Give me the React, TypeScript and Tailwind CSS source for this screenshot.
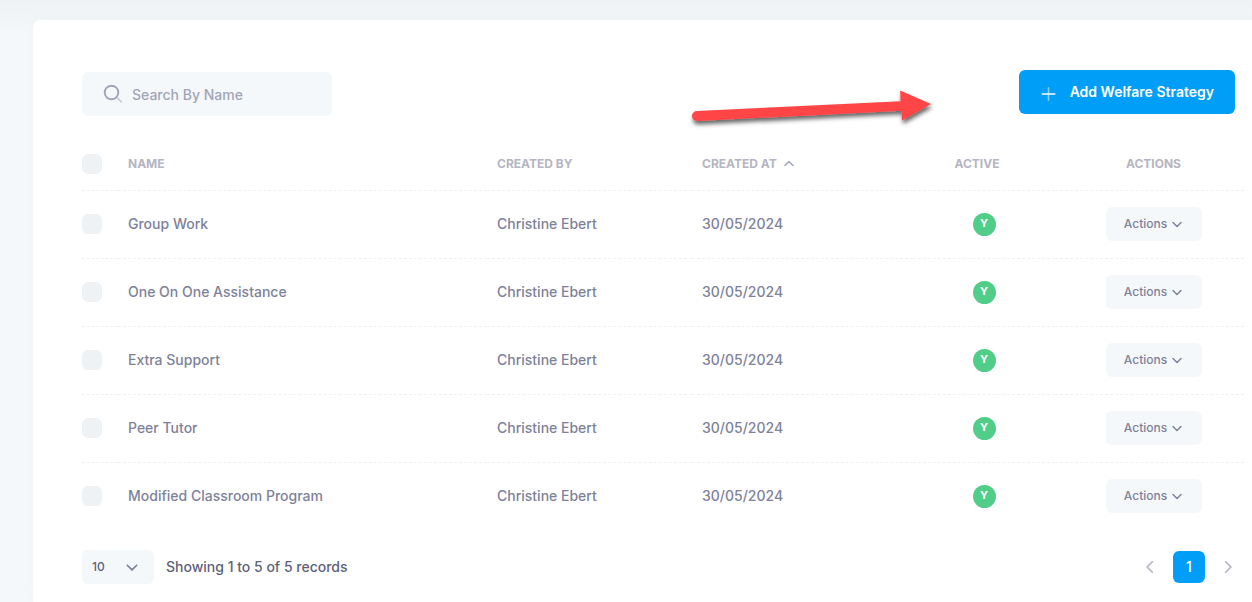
import { useState } from "react";

interface Strategy {
  id: number;
  name: string;
  createdBy: string;
  createdAt: string;
  active: boolean;
}

const strategies: Strategy[] = [
  { id: 1, name: "Group Work", createdBy: "Christine Ebert", createdAt: "30/05/2024", active: true },
  { id: 2, name: "One On One Assistance", createdBy: "Christine Ebert", createdAt: "30/05/2024", active: true },
  { id: 3, name: "Extra Support", createdBy: "Christine Ebert", createdAt: "30/05/2024", active: true },
  { id: 4, name: "Peer Tutor", createdBy: "Christine Ebert", createdAt: "30/05/2024", active: true },
  { id: 5, name: "Modified Classroom Program", createdBy: "Christine Ebert", createdAt: "30/05/2024", active: true },
];

const chevronPaths = {
  up: "M2 7.5 6 3.5 10 7.5",
  down: "M2 4.5 6 8.5 10 4.5",
  left: "M8 1.5 3.5 6 8 10.5",
  right: "M4 1.5 8.5 6 4 10.5",
};

function Chevron({ dir, className }: { dir: keyof typeof chevronPaths; className?: string }) {
  return (
    <svg
      viewBox="0 0 12 12"
      className={className}
      fill="none"
      stroke="currentColor"
      strokeWidth="1.5"
      strokeLinecap="round"
      strokeLinejoin="round"
      aria-hidden="true"
    >
      <path d={chevronPaths[dir]} />
    </svg>
  );
}

function SearchIcon() {
  return (
    <svg
      viewBox="0 0 20 20"
      className="pointer-events-none absolute left-[21px] top-3 size-5"
      fill="none"
      stroke="#a1a5b7"
      aria-hidden="true"
    >
      <path d="M14 13.6 18.8 18.4" strokeWidth="2" opacity="0.5" />
      <circle cx="8.5" cy="8.5" r="6.8" strokeWidth="1.9" />
    </svg>
  );
}

function PlusIcon() {
  return (
    <svg viewBox="0 0 16 16" className="mt-1 size-4" fill="none" stroke="#fff" strokeLinecap="round" aria-hidden="true">
      <path d="M8.5 1.8V14.2" strokeWidth="1.6" opacity="0.5" />
      <path d="M2.3 8H14.7" strokeWidth="1.6" />
    </svg>
  );
}

function PointerArrow() {
  return (
    <svg
      viewBox="0 0 250 50"
      className="pointer-events-none absolute right-[306px] top-4 h-[50px] w-[250px]"
      aria-hidden="true"
    >
      <defs>
        <filter id="arrow-shadow" x="-10%" y="-40%" width="120%" height="200%">
          <feDropShadow dx="1" dy="3.5" stdDeviation="2" floodColor="#000" floodOpacity="0.6" />
        </filter>
      </defs>
      <g filter="url(#arrow-shadow)" fill="#ff4444">
        <path d="M9 25 212.5 15.2 212.2 4.5 243 18 214 34.5 213.4 24.8 9 35A5 5 0 0 1 9 25Z" />
      </g>
    </svg>
  );
}

function CheckBox({ label }: { label: string }) {
  return (
    <input
      type="checkbox"
      aria-label={label}
      className="block size-5 appearance-none rounded-md bg-[#eff2f5] checked:bg-[#009ef7]"
    />
  );
}

export default function App() {
  const [search, setSearch] = useState("");
  const rows = strategies.filter((s) => s.name.toLowerCase().includes(search.toLowerCase()));

  return (
    <main className="min-h-screen bg-[#f5f8fa] bg-linear-to-b from-[#eff2f5] to-[#f5f8fa] to-[36px] pl-[33px] pt-5 font-[Inter,'Liberation_Sans',sans-serif] text-sm font-medium text-[#7e8299]">
      <section className="min-h-[calc(100vh-20px)] rounded-tl-lg bg-white pb-4 pl-[49px] pr-2 pt-[50px] shadow-[0_0_20px_rgba(76,87,125,0.02)]">
        <div className="relative flex items-start justify-between pr-[9px]">
          <div className="relative mt-0.5">
            <SearchIcon />
            <input
              type="text"
              aria-label="Search By Name"
              placeholder="Search By Name"
              value={search}
              onChange={(e) => setSearch(e.target.value)}
              className="block h-11 w-[250px] rounded-md bg-[#f5f8fa] pl-[50px] pr-3 text-sm text-[#5e6278] outline-none placeholder:text-[#a1a5b7]"
            />
          </div>
          <PointerArrow />
          <button
            type="button"
            className="flex h-11 items-center gap-3.5 rounded-md bg-[#009ef7] px-[21px] text-sm font-semibold text-white"
          >
            <PlusIcon />
            Add Welfare Strategy
          </button>
        </div>

        <table className="mt-[22px] w-full table-fixed border-collapse text-left">
          <colgroup>
            <col className="w-9" />
            <col />
            <col className="w-[205px]" />
            <col className="w-[221px]" />
            <col className="w-[142px]" />
            <col className="w-[189px]" />
          </colgroup>
          <thead>
            <tr className="h-[52px] border-b border-dashed border-[#eff2f5] text-xs uppercase text-[#b5b5c3]">
              <th scope="col">
                <CheckBox label="Select all" />
              </th>
              <th scope="col" className="px-2.5 font-bold">Name</th>
              <th scope="col" className="px-2.5 font-bold">Created By</th>
              <th scope="col" aria-sort="ascending" className="px-2.5 font-bold">
                <span className="flex items-center gap-1.5">
                  Created At
                  <Chevron dir="up" className="size-3 text-[#a1a5b7]" />
                </span>
              </th>
              <th scope="col" className="pl-2.5 pr-6 text-center font-bold">Active</th>
              <th scope="col" className="pl-2 text-center font-bold">Actions</th>
            </tr>
          </thead>
          <tbody>
            {rows.map((row) => (
              <tr key={row.id} className="h-[68px] border-b border-dashed border-[#eff2f5] last:border-b-0">
                <td>
                  <CheckBox label={`Select ${row.name}`} />
                </td>
                <td className="px-2.5">{row.name}</td>
                <td className="px-2.5">{row.createdBy}</td>
                <td className="px-2.5">{row.createdAt}</td>
                <td className="text-center">
                  <span className="inline-flex size-[23px] items-center justify-center rounded-full bg-[#50cd89] align-middle text-[11px] font-bold text-white">
                    {row.active ? "Y" : "N"}
                  </span>
                </td>
                <td className="pl-2 text-center">
                  <button
                    type="button"
                    className="inline-flex h-[34px] w-24 items-center justify-center gap-1 rounded-md bg-[#f5f8fa] align-middle text-xs font-medium"
                  >
                    Actions
                    <Chevron dir="down" className="size-3" />
                  </button>
                </td>
              </tr>
            ))}
          </tbody>
        </table>

        <div className="mt-5 flex items-center justify-between">
          <div className="flex items-center gap-3 text-[#5e6278]">
            <div className="relative">
              <select
                aria-label="Records per page"
                defaultValue="10"
                className="block h-[34px] w-[72px] appearance-none rounded-md bg-[#f5f8fa] pl-2.5 text-xs font-medium outline-none"
              >
                <option>10</option>
                <option>25</option>
                <option>50</option>
              </select>
              <Chevron dir="down" className="pointer-events-none absolute right-[15px] top-2.5 size-3.5 text-[#7e8299]" />
            </div>
            <span>Showing 1 to 5 of 5 records</span>
          </div>
          <nav aria-label="Pagination" className="flex items-center gap-[7px] text-[#b5b5c3]">
            <button type="button" aria-label="Previous page" className="flex size-8 items-center justify-center">
              <Chevron dir="left" className="size-3.5" />
            </button>
            <button type="button" aria-current="page" className="size-8 rounded-md bg-[#009ef7] font-medium text-white">
              1
            </button>
            <button type="button" aria-label="Next page" className="flex size-8 items-center justify-center">
              <Chevron dir="right" className="size-3.5" />
            </button>
          </nav>
        </div>
      </section>
    </main>
  );
}
